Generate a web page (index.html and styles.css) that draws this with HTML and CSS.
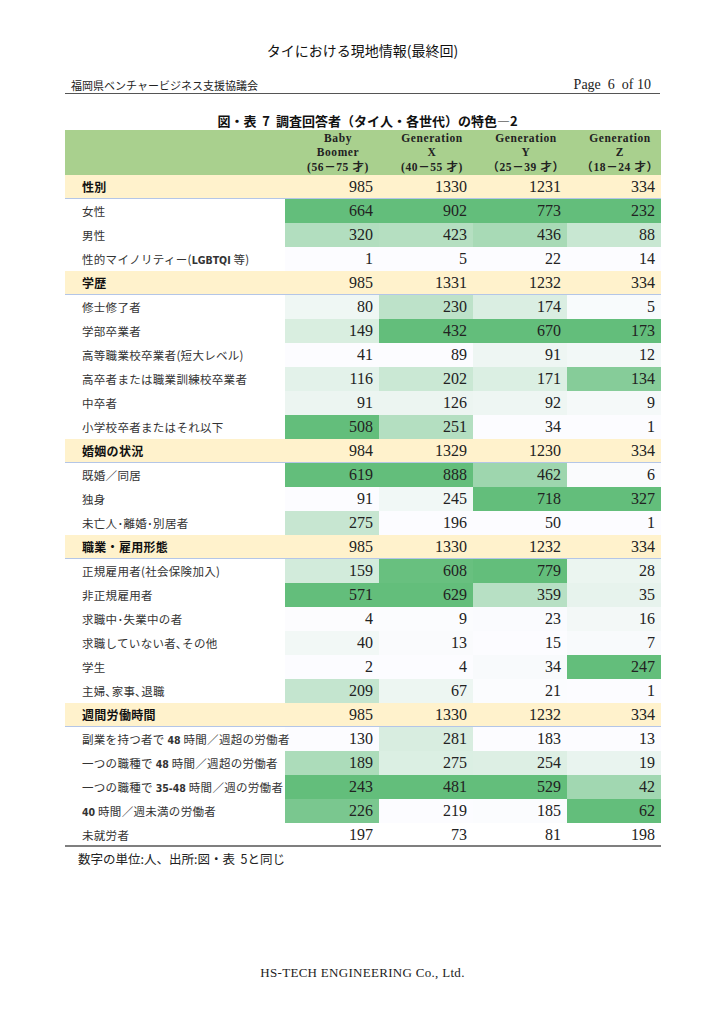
FILE: index.html
```html
<!DOCTYPE html>
<html lang="ja">
<head>
<meta charset="utf-8">
<title>タイにおける現地情報(最終回)</title>
<link rel="stylesheet" href="styles.css">
</head>
<body>
<div class="page">
  <div class="title">タイにおける現地情報(最終回)</div>
  <div class="runhead">
    <span class="org">福岡県ベンチャービジネス支援協議会</span>
    <span class="pageno">Page&nbsp; 6 &nbsp;of 10</span>
  </div>
  <div class="caption">図・表 &nbsp;7 &nbsp;調査回答者（タイ人・各世代）の特色―2</div>
  <table class="data">
    <colgroup>
      <col class="c-label"><col class="c-num"><col class="c-num"><col class="c-num"><col class="c-num">
    </colgroup>
    <thead>
      <tr>
        <th></th>
        <th>Baby<br>Boomer<br>(56－75 才)</th>
        <th>Generation<br>X<br>(40－55 才)</th>
        <th>Generation<br>Y<br>（25－39 才）</th>
        <th>Generation<br>Z<br>（18－24 才）</th>
      </tr>
    </thead>
    <tbody>
      <tr class="sec"><td>性別</td><td>985</td><td>1330</td><td>1231</td><td>334</td></tr>
      <tr><td>女性</td><td style="background:#63be7b">664</td><td style="background:#63be7b">902</td><td style="background:#63be7b">773</td><td style="background:#63be7b">232</td></tr>
      <tr><td>男性</td><td style="background:#b2debf">320</td><td style="background:#b5dfc1">423</td><td style="background:#a8dab6">436</td><td style="background:#c8e7d2">88</td></tr>
      <tr><td>性的マイノリティー(<b>LGBTQI</b> 等)</td><td style="background:#fcfcff">1</td><td style="background:#fcfcff">5</td><td style="background:#fcfcff">22</td><td style="background:#fcfcff">14</td></tr>

      <tr class="sec"><td>学歴</td><td>985</td><td>1331</td><td>1232</td><td>334</td></tr>
      <tr><td>修士修了者</td><td style="background:#eff7f4">80</td><td style="background:#bde2c9">230</td><td style="background:#daeee2">174</td><td style="background:#f8fbfc">5</td></tr>
      <tr><td>学部卒業者</td><td style="background:#d9eee0">149</td><td style="background:#63be7b">432</td><td style="background:#63be7b">670</td><td style="background:#63be7b">173</td></tr>
      <tr><td>高等職業校卒業者(短大レベル)</td><td style="background:#fcfcff">41</td><td style="background:#fcfcff">89</td><td style="background:#eef6f3">91</td><td style="background:#f2f8f7">12</td></tr>
      <tr><td>高卒者または職業訓練校卒業者</td><td style="background:#e3f2ea">116</td><td style="background:#cae8d4">202</td><td style="background:#dbefe3">171</td><td style="background:#86cc99">134</td></tr>
      <tr><td>中卒者</td><td style="background:#ecf5f1">91</td><td style="background:#ecf5f1">126</td><td style="background:#eef6f3">92</td><td style="background:#f5f9f9">9</td></tr>
      <tr><td>小学校卒者またはそれ以下</td><td style="background:#63be7b">508</td><td style="background:#b4dfc1">251</td><td style="background:#fcfcff">34</td><td style="background:#fcfcff">1</td></tr>

      <tr class="sec"><td>婚姻の状況</td><td>984</td><td>1329</td><td>1230</td><td>334</td></tr>
      <tr><td>既婚／同居</td><td style="background:#63be7b">619</td><td style="background:#63be7b">888</td><td style="background:#9ed6ae">462</td><td style="background:#fafbfd">6</td></tr>
      <tr><td>独身</td><td style="background:#fcfcff">91</td><td style="background:#f1f8f6">245</td><td style="background:#63be7b">718</td><td style="background:#63be7b">327</td></tr>
      <tr><td>未亡人･離婚･別居者</td><td style="background:#c7e6d1">275</td><td style="background:#fcfcff">196</td><td style="background:#fcfcff">50</td><td style="background:#fcfcff">1</td></tr>

      <tr class="sec"><td>職業・雇用形態</td><td>985</td><td>1330</td><td>1232</td><td>334</td></tr>
      <tr><td>正規雇用者(社会保険加入)</td><td style="background:#d2ebdb">159</td><td style="background:#68c07f">608</td><td style="background:#63be7b">779</td><td style="background:#ebf5f0">28</td></tr>
      <tr><td>非正規雇用者</td><td style="background:#63be7b">571</td><td style="background:#63be7b">629</td><td style="background:#b7e0c4">359</td><td style="background:#e7f3ed">35</td></tr>
      <tr><td>求職中･失業中の者</td><td style="background:#fcfcfe">4</td><td style="background:#fbfcfe">9</td><td style="background:#fafbfe">23</td><td style="background:#f3f8f7">16</td></tr>
      <tr><td>求職していない者､その他</td><td style="background:#f2f8f6">40</td><td style="background:#fafbfd">13</td><td style="background:#fcfcff">15</td><td style="background:#f8fafc">7</td></tr>
      <tr><td>学生</td><td style="background:#fcfcff">2</td><td style="background:#fcfcff">4</td><td style="background:#f8fafc">34</td><td style="background:#63be7b">247</td></tr>
      <tr><td>主婦､家事､退職</td><td style="background:#c4e5cf">209</td><td style="background:#edf6f2">67</td><td style="background:#fbfcfe">21</td><td style="background:#fcfcff">1</td></tr>

      <tr class="sec"><td>週間労働時間</td><td>985</td><td>1330</td><td>1232</td><td>334</td></tr>
      <tr><td>副業を持つ者で <b>48</b> 時間／週超の労働者</td><td style="background:#fcfcff">130</td><td style="background:#d8ede0">281</td><td style="background:#fcfcff">183</td><td style="background:#fcfcff">13</td></tr>
      <tr><td>一つの職種で <b>48</b> 時間／週超の労働者</td><td style="background:#acdcba">189</td><td style="background:#dbefe3">275</td><td style="background:#ddefe4">254</td><td style="background:#e9f4ef">19</td></tr>
      <tr><td>一つの職種で <b>35-48</b> 時間／週の労働者</td><td style="background:#63be7b">243</td><td style="background:#63be7b">481</td><td style="background:#63be7b">529</td><td style="background:#a1d7b1">42</td></tr>
      <tr><td><b>40</b> 時間／週未満の労働者</td><td style="background:#7ac78f">226</td><td style="background:#fcfcff">219</td><td style="background:#fbfcfe">185</td><td style="background:#63be7b">62</td></tr>
      <tr class="last"><td>未就労者</td><td>197</td><td>73</td><td>81</td><td>198</td></tr>
    </tbody>
  </table>
  <div class="note">数字の単位:人、出所:図・表 &nbsp;5と同じ</div>
  <div class="footer">HS-TECH ENGINEERING Co., Ltd.</div>
</div>
</body>
</html>
```
FILE: styles.css
```css
html, body {
  margin: 0;
  padding: 0;
  background: #ffffff;
}

body {
  font-family: "Noto Sans CJK JP", "Noto Sans", sans-serif;
  color: #222;
}

.page {
  width: 724px;
  padding: 0 64px 0 65px;
  box-sizing: border-box;
}

.title {
  margin-top: 40px;
  height: 20px;
  line-height: 20px;
  font-size: 14px;
  text-align: center;
  color: #111;
}

.runhead {
  margin-top: 16px;
  display: flex;
  justify-content: space-between;
  align-items: flex-end;
  border-bottom: 1.5px solid #555;
  padding: 0 9px 0 6px;
  height: 17px;
}

.org {
  font-size: 11px;
  line-height: 16px;
  color: #222;
}

.pageno {
  font-family: "Liberation Serif", "Times New Roman", serif;
  font-size: 14px;
  line-height: 16px;
  color: #222;
}

.caption {
  margin-top: 18px;
  font-size: 13px;
  line-height: 18px;
  font-weight: bold;
  text-align: center;
  padding-left: 10px;
  margin-bottom: 0;
  color: #111;
}

.data {
  width: 595px;
  table-layout: fixed;
  border-collapse: collapse;
  border-spacing: 0;
}

.c-label { width: 220px; }
.c-num { width: 94px; }

.data thead tr {
  height: 45px;
}

.data thead th {
  background: #a9d08e;
  padding: 0 0 0 12px;
  font-family: "Liberation Serif", "Times New Roman", "Noto Sans CJK JP", serif;
  font-weight: bold;
  font-size: 11.5px;
  line-height: 14.5px;
  letter-spacing: 0.6px;
  text-align: center;
  vertical-align: middle;
  color: #222;
}

.data tbody tr {
  height: 24px;
}

.data td {
  padding: 0 6px 0 0;
  font-family: "Liberation Serif", "Times New Roman", serif;
  font-size: 16px;
  line-height: 18px;
  text-align: right;
  vertical-align: middle;
  color: #222;
  white-space: nowrap;
}

.data td:first-child {
  padding-left: 17px;
  text-align: left;
  font-family: "Noto Sans CJK JP", "Noto Sans", sans-serif;
  font-size: 11.5px;
  letter-spacing: 0.3px;
  color: #333;
}

.data td:first-child b {
  font-family: "DejaVu Sans Condensed", "Liberation Sans", sans-serif;
  font-weight: bold;
  font-size: 10.5px;
  letter-spacing: 0;
}

.data tr.sec td {
  background: #fff2cc;
  box-shadow: inset 0 -1px 0 #b4c6e7;
}

.data tr.sec td:first-child {
  font-weight: bold;
  font-size: 12px;
  color: #111;
}

.data tr.last td {
  box-shadow: inset 0 -2px 0 #7f7f7f;
}

.note {
  margin-top: 3px;
  padding-left: 13px;
  font-size: 12.5px;
  line-height: 18px;
  color: #222;
}

.footer {
  margin-top: 96px;
  font-family: "Liberation Serif", "Times New Roman", serif;
  font-size: 13px;
  line-height: 18px;
  letter-spacing: 0.3px;
  text-align: center;
  color: #222;
}
```
